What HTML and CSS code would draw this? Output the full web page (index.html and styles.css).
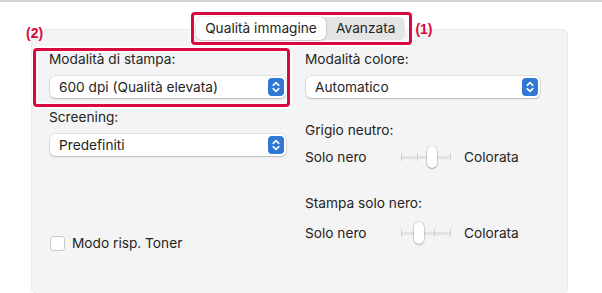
FILE: index.html
```html
<!DOCTYPE html>
<html>
  <head>
    <title>Qualità immagine</title>
    <link rel="stylesheet" href="styles.css">
  </head>
  <body>
    <div class="topline"></div>

    <div class="sheet">
      <div class="tabs">
        <div class="segmented callout callout-tabs">
          <span class="tab selected">Qualità immagine</span>
          <span class="tab">Avanzata</span>
          <span class="tag tag-1">(1)</span>
        </div>
      </div>

      <div class="panel">
        <div class="column">
          <div class="field callout callout-field">
            <span class="tag tag-2">(2)</span>
            <div class="label">Modalità di stampa:</div>
            <div class="popup">
              <span>600 dpi (Qualità elevata)</span>
              <span class="stepper">
                <svg width="8" height="12" viewBox="0 0 8 12"><path d="M1.2 4.4 4 1.6l2.8 2.8M1.2 7.6 4 10.4l2.8-2.8" fill="none" stroke="#fff" stroke-width="1.5" stroke-linecap="round" stroke-linejoin="round"/></svg>
              </span>
            </div>
          </div>

          <div class="field field-second">
            <div class="label">Screening:</div>
            <div class="popup">
              <span>Predefiniti</span>
              <span class="stepper">
                <svg width="8" height="12" viewBox="0 0 8 12"><path d="M1.2 4.4 4 1.6l2.8 2.8M1.2 7.6 4 10.4l2.8-2.8" fill="none" stroke="#fff" stroke-width="1.5" stroke-linecap="round" stroke-linejoin="round"/></svg>
              </span>
            </div>
          </div>

          <label class="check">
            <span class="box"></span>
            Modo risp. Toner
          </label>
        </div>

        <div class="column">
          <div class="field">
            <div class="label">Modalità colore:</div>
            <div class="popup">
              <span>Automatico</span>
              <span class="stepper">
                <svg width="8" height="12" viewBox="0 0 8 12"><path d="M1.2 4.4 4 1.6l2.8 2.8M1.2 7.6 4 10.4l2.8-2.8" fill="none" stroke="#fff" stroke-width="1.5" stroke-linecap="round" stroke-linejoin="round"/></svg>
              </span>
            </div>
          </div>

          <div class="label label-gray">Grigio neutro:</div>
          <div class="slider-row">
            <span>Solo nero</span>
            <div class="slider">
              <span class="tick"></span><span class="tick"></span><span class="tick"></span><span class="tick"></span>
              <span class="knob" style="left: 52%"></span>
            </div>
            <span>Colorata</span>
          </div>

          <div class="label label-black">Stampa solo nero:</div>
          <div class="slider-row">
            <span>Solo nero</span>
            <div class="slider">
              <span class="tick"></span><span class="tick"></span><span class="tick"></span><span class="tick"></span>
              <span class="knob" style="left: 26%"></span>
            </div>
            <span>Colorata</span>
          </div>
        </div>
      </div>
    </div>
  </body>
</html>
```

FILE: styles.css
```css
body {
  margin: 0;
  background-color: #fff;
  font-family: Inter, "Liberation Sans", sans-serif;
  font-size: 13.7px;
  color: #242424;
  overflow: hidden;
}

.topline {
  height: 2px;
  background-color: #d4d4d4;
}

.sheet {
  padding-left: 31px;
  width: 537px;
}

/* tab strip */
.tabs {
  display: flex;
  padding-left: 165px;
  margin-top: 15px;
  position: relative;
  z-index: 1;
}

.segmented {
  display: flex;
  height: 23px;
  background-color: #e4e4e4;
  border-radius: 6px;
}

.tab {
  display: flex;
  align-items: center;
  justify-content: center;
  padding: 0 10px;
  border-radius: 6px;
  line-height: 23px;
}

.tab.selected {
  width: 130px;
  padding: 0;
  background-color: #fff;
  box-shadow: 0 0 0 0.5px rgba(0, 0, 0, 0.12), 0 1px 2px rgba(0, 0, 0, 0.15);
}

.tab:last-of-type {
  width: 85px;
  padding: 0;
}

/* red annotation frames */
.callout {
  position: relative;
}

.callout::after {
  content: "";
  position: absolute;
  border: 3px solid #d8093c;
  border-radius: 4px;
  box-shadow: 0 0 0 1.5px #fff, inset 0 0 0 1px rgba(255, 255, 255, 0.6);
  pointer-events: none;
}

.callout-tabs::after {
  inset: -5px -7px -5px -5px;
}

.callout-field::after {
  inset: -3px -4px -9px -16px;
}

.tag {
  position: absolute;
  font-family: "Liberation Sans", sans-serif;
  font-weight: bold;
  font-size: 14px;
  line-height: 17px;
  color: #d8093c;
}

.tag-1 {
  left: calc(100% + 10px);
  top: 4px;
}

.tag-2 {
  left: -23px;
  top: -26px;
}

/* panel */
.panel {
  margin-top: -11px;
  height: 242px;
  padding: 21px 0 0 17px;
  background-color: #f4f4f4;
  border: 1px solid #e9e9e9;
  border-radius: 6px;
  display: grid;
  grid-template-columns: 237px 235px;
  column-gap: 19px;
}

.column {
  display: flex;
  flex-direction: column;
}

.label {
  line-height: 17px;
  margin-bottom: 8px;
  white-space: nowrap;
}

.field-second {
  margin-top: 11px;
}

.label-gray {
  margin-top: 24px;
  margin-bottom: 7px;
}

.label-black {
  margin-top: 27px;
  margin-bottom: 10px;
}

/* popup buttons */
.popup {
  height: 22px;
  margin-left: 1px;
  padding: 0 2px 0 9px;
  display: flex;
  align-items: center;
  justify-content: space-between;
  background-color: #fff;
  border-radius: 5px;
  box-shadow: 0 0 0 0.5px rgba(0, 0, 0, 0.14), 0 1px 1.5px rgba(0, 0, 0, 0.18);
}

.stepper {
  width: 16px;
  height: 18px;
  border-radius: 4px;
  background-color: #2f78d4;
  display: flex;
  align-items: center;
  justify-content: center;
}

/* checkbox */
.check {
  margin-top: 79px;
  display: flex;
  align-items: center;
  gap: 7px;
  line-height: 17px;
  margin-left: 1px;
}

.box {
  width: 13px;
  height: 13px;
  background-color: #fff;
  border: 1px solid #c9c9c9;
  border-radius: 3px;
}

/* sliders */
.slider-row {
  height: 22px;
  display: grid;
  grid-template-columns: 83px 50px auto;
  column-gap: 13px;
  align-items: center;
}

.slider {
  position: relative;
  height: 22px;
  display: flex;
  align-items: center;
  justify-content: space-between;
  background: linear-gradient(#e3e3e3, #e3e3e3) center / 100% 3px no-repeat;
}

.tick {
  width: 1px;
  height: 8px;
  background-color: #cfcfcf;
}

.knob {
  position: absolute;
  top: 0;
  width: 10px;
  height: 22px;
  background-color: #fff;
  border-radius: 5px;
  box-shadow: 0 0 0 0.5px rgba(0, 0, 0, 0.2), 0 1px 2px rgba(0, 0, 0, 0.22);
}
```
